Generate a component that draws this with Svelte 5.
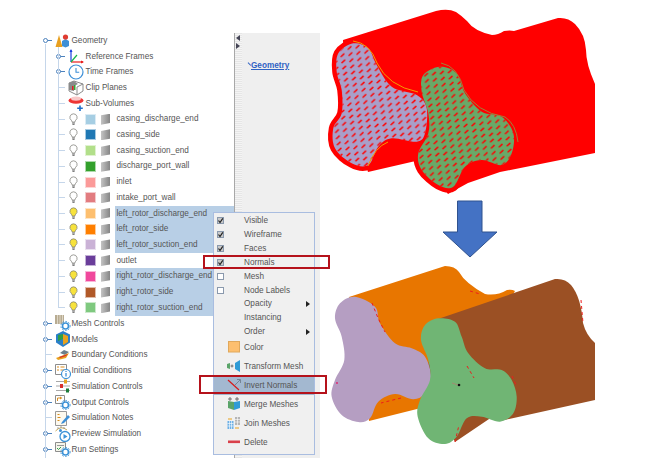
<script>
  // tree rows: kind top = root level, sub = under Geometry, mesh = surface with bulb and colour
  const geometryKids = [
    { label: 'Reference Frames', icon: 'axes', handle: true },
    { label: 'Time Frames', icon: 'clock', handle: true },
    { label: 'Clip Planes', icon: 'clip' },
    { label: 'Sub-Volumes', icon: 'subvol' }
  ];

  const meshes = [
    { label: 'casing_discharge_end', color: '#a6cee3' },
    { label: 'casing_side', color: '#1f78b4' },
    { label: 'casing_suction_end', color: '#b2df8a' },
    { label: 'discharge_port_wall', color: '#33a02c' },
    { label: 'inlet', color: '#fb9a99' },
    { label: 'intake_port_wall', color: '#e27c80' },
    { label: 'left_rotor_discharge_end', color: '#fdbf6f', on: true },
    { label: 'left_rotor_side', color: '#ff7f00', on: true },
    { label: 'left_rotor_suction_end', color: '#cab2d6', on: true },
    { label: 'outlet', color: '#6a3d9a' },
    { label: 'right_rotor_discharge_end', color: '#f0489c', on: true },
    { label: 'right_rotor_side', color: '#b15928', on: true },
    { label: 'right_rotor_suction_end', color: '#7fc97f', on: true }
  ];

  const sections = [
    { label: 'Mesh Controls', icon: 'meshctl', handle: true },
    { label: 'Models', icon: 'models', handle: true },
    { label: 'Boundary Conditions', icon: 'bc' },
    { label: 'Initial Conditions', icon: 'init', handle: true },
    { label: 'Simulation Controls', icon: 'sliders', handle: true },
    { label: 'Output Controls', icon: 'output', handle: true },
    { label: 'Simulation Notes', icon: 'notes' },
    { label: 'Preview Simulation', icon: 'preview', handle: true },
    { label: 'Run Settings', icon: 'run', handle: true }
  ];

  const toggles = [
    { label: 'Visible', box: 'on' },
    { label: 'Wireframe', box: 'on' },
    { label: 'Faces', box: 'on' },
    { label: 'Normals', box: 'on' },
    { label: 'Mesh', box: 'off' },
    { label: 'Node Labels', box: 'off' },
    { label: 'Opacity', more: true },
    { label: 'Instancing' },
    { label: 'Order', more: true }
  ];

  const actions = [
    { label: 'Color', icon: 'color' },
    { label: 'Transform Mesh', icon: 'transform' },
    { label: 'Invert Normals', icon: 'invert', active: true },
    { label: 'Merge Meshes', icon: 'merge' },
    { label: 'Join Meshes', icon: 'join' },
    { label: 'Delete', icon: 'delete' }
  ];

  // closed smooth curve through points (catmull-rom), points given in 3x coords
  function smooth(pts, ox = 0, oy = 0, s = 1 / 3) {
    const p = pts.map(([x, y]) => [ox + x * s, oy + y * s]);
    const n = p.length;
    let d = `M${p[0][0].toFixed(1)} ${p[0][1].toFixed(1)}`;
    for (let i = 0; i < n; i++) {
      const a = p[(i - 1 + n) % n], b = p[i], c = p[(i + 1) % n], e = p[(i + 2) % n];
      const c1 = [b[0] + (c[0] - a[0]) / 6, b[1] + (c[1] - a[1]) / 6];
      const c2 = [c[0] - (e[0] - b[0]) / 6, c[1] - (e[1] - b[1]) / 6];
      d += `C${c1[0].toFixed(1)} ${c1[1].toFixed(1)} ${c2[0].toFixed(1)} ${c2[1].toFixed(1)} ${c[0].toFixed(1)} ${c[1].toFixed(1)}`;
    }
    return d + 'Z';
  }

  const topLeft = smooth([[85,70],[130,85],[155,135],[200,200],[275,225],[305,265],[300,340],[275,365],[200,355],[160,380],[130,435],[80,430],[30,385],[25,325],[50,280],[50,210],[35,155],[40,100]], 325, 20);
  const topRight = smooth([[345,140],[395,160],[420,220],[470,275],[530,290],[565,340],[560,400],[530,435],[470,420],[420,440],[385,500],[340,495],[290,450],[280,400],[310,340],[310,280],[290,215],[295,165]], 325, 20);
  const lilac = smooth([[90,170],[150,200],[165,250],[210,310],[260,325],[300,350],[318,410],[300,460],[265,478],[210,462],[160,485],[135,535],[100,546],[50,525],[20,470],[30,420],[58,360],[50,290],[30,235],[45,190]], 325, 240);
  const green = smooth([[340,235],[390,245],[410,290],[430,340],[480,385],[530,390],[560,420],[575,470],[565,520],[525,545],[470,530],[425,535],[395,590],[360,612],[310,595],[278,530],[285,480],[315,420],[310,360],[288,300],[300,255]], 325, 240);
</script>

{#snippet gear()}
  <circle cx="10.5" cy="11" r="3" fill="#fff" stroke="#3c93d8" stroke-width="1.6" />
  <circle cx="10.5" cy="11" r="4.6" fill="none" stroke="#3c93d8" stroke-width="1" stroke-dasharray="1.5 1.5" />
{/snippet}

{#snippet treeIcon(name)}
  <svg class="ticon" viewBox="0 0 16 16" width="16" height="16">
    {#if name === 'geo'}
      <path d="M4 2 7.5 14H.5Z" fill="#e8a020" />
      <path d="M7 8l3.500-2 3.500 2v5l-3.500 1.500L7 13Z" fill="#3d8fd6" />
      <circle cx="10.5" cy="4" r="2.6" fill="#e03c31" />
    {:else if name === 'axes'}
      <path d="M3 14V2" stroke="#1a3fe0" stroke-width="1.2" fill="none" />
      <path d="M3 14h12" stroke="#e81c1c" stroke-width="1.2" fill="none" />
      <path d="M3 14l6-7" stroke="#19b54a" stroke-width="1.2" fill="none" />
      <path d="M1.5 4 3 1l1.5 3Z" fill="#1a3fe0" />
      <path d="M13 12.5l3 1.5-3 1.500Z" fill="#e81c1c" />
    {:else if name === 'clock'}
      <circle cx="8" cy="8" r="7" fill="#fff" stroke="#3d8fd6" stroke-width="1.2" />
      <path d="M8 4v4.300h3.200" stroke="#3d8fd6" stroke-width="1.1" fill="none" />
    {:else if name === 'clip'}
      <path d="M1 3l5-2 9 3v7l-6 4-8-4Z" fill="#fff" stroke="#8b8b8b" />
      <path d="M1 3l5-2 4 3-4 2v5l-5-1Z" fill="#8a8a8a" />
      <path d="M4 10V6h1.500v4Z" fill="#d22" />
      <path d="M6 10V5h1.500v5Z" fill="#3a3" />
      <path d="M9 15V7l6-3" stroke="#8b8b8b" fill="none" />
    {:else if name === 'subvol'}
      <ellipse cx="8" cy="5.5" rx="7.5" ry="3.2" fill="#ee3535" />
      <ellipse cx="8" cy="3.6" rx="5" ry="2.2" fill="#f8c8c8" />
      <path d="M12 10.500v5.500M9.200 13.200h5.600" stroke="#1d6fc8" stroke-width="1.600" />
    {:else if name === 'meshctl'}
      <path d="M0 0h9v9H0Z" fill="#b8ac92" />
      <path d="M2.500 0v9M5 0v9M7.500 0v9" stroke="#ece7db" stroke-width=".7" />
      {@render gear()}
    {:else if name === 'models'}
      <path d="M8 0l7 3.500v8L8 16 1 11.500v-8Z" fill="#2a7fc8" />
      <path d="M8 3l5 2v6l-5 3Z" fill="#e8a21e" />
      <path d="M3 4l5-1v5L3 10Z" fill="#2e9e45" />
    {:else if name === 'bc'}
      <path d="M5 6l4-3 5 2-4 3Z" fill="#6c7f8c" />
      <path d="M1 11l13-5-3 5-8 2Z" fill="#e8a21e" />
      <path d="M4 10l9-3-2 2-6 2Z" fill="#d9312b" />
    {:else if name === 'init'}
      <path d="M.5 1.500h11v10H.5Z" fill="#fff" stroke="#8d8d8d" />
      <path d="M2 4h2M2 7h2M5.500 4h4M5.500 7h4" stroke="#d98d1e" />
      <circle cx="11" cy="11" r="4.500" fill="#fff" stroke="#3c93d8" stroke-width="1.200" />
      <path d="M11 10v3.500M11 8v1" stroke="#3c93d8" stroke-width="1.300" />
    {:else if name === 'sliders'}
      <path d="M1 3.500h14M1 8h14M1 12.500h14" stroke="#a8a8a8" />
      <rect x="9" y="1.500" width="3" height="4" fill="#e8a21e" />
      <rect x="5" y="6" width="3" height="4" fill="#d9312b" />
      <rect x="11" y="10.500" width="3" height="4" fill="#1c7d3a" />
    {:else if name === 'output'}
      <path d="M.5 1.500h9v8h-9Z" fill="#fff" stroke="#8d8d8d" />
      <path d="M2.500 7V4h3" stroke="#d98d1e" fill="none" />
      <path d="M5 2.500 7.500 4 5 5.500Z" fill="#d98d1e" />
      {@render gear()}
    {:else if name === 'notes'}
      <path d="M.5 1.500h11v14H.5Z" fill="#fdf9ee" stroke="#999" />
      <path d="M2.500 4.500h2M2.500 7.500h3M2.500 10.500h2" stroke="#d98d1e" />
      <path d="M7 12l6-7 2 2-6 6-3 1Z" fill="#3d8fd6" />
    {:else if name === 'preview'}
      <path d="M.5 5Q6-1 12 4" stroke="#c9a850" fill="none" />
      <path d="M3 1v2M6 0v2M9 1v2" stroke="#8a8a8a" stroke-width=".8" />
      <circle cx="5.500" cy="4.500" r="1.500" fill="#3d8fd6" />
      <circle cx="10" cy="10.500" r="5" fill="#fff" stroke="#3c93d8" stroke-width="1.300" />
      <path d="M8.500 8l4 2.500-4 2.500Z" fill="#3c93d8" />
    {:else if name === 'run'}
      <path d="M.5 1.500h10v9H.5Z" fill="#f5f5ea" stroke="#8d8d8d" />
      <path d="M2 4.500h7" stroke="#999" />
      <path d="M2 7l1.500 1.500L6 6" stroke="#2ea04a" fill="none" />
      {@render gear()}
    {/if}
  </svg>
{/snippet}

{#snippet handle()}
  <svg class="handle" viewBox="0 0 9 7" width="9" height="7">
    <circle cx="2.5" cy="3.5" r="2" fill="#fff" stroke="#4d82bd" />
    <path d="M4.500 3.500H9" stroke="#4d82bd" />
  </svg>
{/snippet}

{#snippet menuIcon(name)}
  <svg viewBox="0 0 14 14" width="14" height="14">
    {#if name === 'color'}
      <rect x="1.500" y="1.500" width="11" height="10.500" fill="#fdbf6f" stroke="#e0a85c" />
    {:else if name === 'transform'}
      <path d="M0 5l3-1v6L0 9Z" fill="#5aa469" />
      <path d="M3.500 7h3M5 5.500v3" stroke="#555" stroke-width=".8" />
      <path d="M8 4l5-3v12L8 10Z" fill="#2f9bd6" />
    {:else if name === 'invert'}
      <path d="M1 2l11 10" stroke="#d61a1a" stroke-width="1.200" />
      <path d="M8 7l5-5" stroke="#6f7f8f" stroke-width=".9" />
      <path d="M10 1.500h3.500V5" stroke="#6f7f8f" stroke-width=".9" fill="none" />
    {:else if name === 'merge'}
      <path d="M1 4l6 1v8l-6-2Z" fill="#5aa469" />
      <path d="M7 5l6-1v7l-6 2Z" fill="#2f9bd6" />
      <path d="M3 0v4M10 0v4M1 2h4M8 2h4" stroke="#555" stroke-width=".8" />
    {:else if name === 'join'}
      <path d="M.5 5h6v8h-6Z" fill="#6eb1e6" />
      <path d="M.5 7.500h6M.5 10h6M2.500 5v8M4.500 5v8" stroke="#fff" stroke-width=".6" />
      <path d="M8 1h5v8H8Z" fill="#b5b5b5" />
      <path d="M8 3.500h5M8 6h5M10.500 1v8" stroke="#fff" stroke-width=".6" />
      <path d="M1 3h4M8 12h4" stroke="#e8a21e" />
    {:else if name === 'delete'}
      <rect x="1" y="5.500" width="12" height="2.600" fill="#d9404a" />
    {/if}
  </svg>
{/snippet}

<div class="page">
  <div class="tree-pane">
    <ul class="tree">
      <li class="row root">
        <span class="slot">{@render handle()}</span>
        {@render treeIcon('geo')}
        <span class="label">Geometry</span>
      </li>
      {#each geometryKids as kid}
        <li class="row sub">
          <span class="slot">
            {#if kid.handle}{@render handle()}{:else}<i class="dash"></i>{/if}
          </span>
          {@render treeIcon(kid.icon)}
          <span class="label">{kid.label}</span>
        </li>
      {/each}
      {#each meshes as m}
        <li class="row mesh">
          <span class="slot"><i class="dash"></i></span>
          <svg class="bulb" viewBox="0 0 10 14" width="9" height="13">
            <path d="M5 .7a4 4 0 0 0-2.400 7.200c.6.600.8 1.200.8 2h3.200c0-.8.200-1.400.8-2A4 4 0 0 0 5 .7Z" fill={m.on ? '#f7e23c' : '#fff'} stroke="#77766f" stroke-width=".8" />
            <path d="M3.500 11h3M3.800 12.500h2.400" stroke="#666" />
          </svg>
          <span class="swatch" style="background:{m.color}"></span>
          <span class="cube"></span>
          <span class="label" class:picked={m.on}>{m.label}</span>
        </li>
      {/each}
      {#each sections as s}
        <li class="row root">
          <span class="slot">
            {#if s.handle}{@render handle()}{:else}<i class="dash"></i>{/if}
          </span>
          {@render treeIcon(s.icon)}
          <span class="label">{s.label}</span>
        </li>
      {/each}
    </ul>
    <span class="spine"></span>
    <span class="spine kids"></span>

    <div class="menu">
      <ul class="toggles">
        {#each toggles as t}
          <li>
            <span class="box">
              {#if t.box}
                <svg viewBox="0 0 7 7" width="7" height="7">
                  <rect x=".5" y=".5" width="6" height="6" fill={t.box === 'on' ? '#c9c9c9' : '#fff'} stroke="#8a99ad" />
                  {#if t.box === 'on'}<path d="M1.500 3.500 3 5.500 5.800 1.300" stroke="#222" stroke-width="1.200" fill="none" />{/if}
                </svg>
              {/if}
            </span>
            <span>{t.label}</span>
            {#if t.more}<i class="more"></i>{/if}
          </li>
        {/each}
      </ul>
      <ul class="actions">
        {#each actions as a}
          <li class:active={a.active}>
            <span class="aicon">{@render menuIcon(a.icon)}</span>
            <span>{a.label}</span>
          </li>
        {/each}
      </ul>
    </div>

    <span class="callout normals"></span>
    <span class="callout invert"></span>
  </div>

  <div class="splitter">
    <i class="nub left"></i>
    <i class="nub right"></i>
  </div>

  <div class="crumb-pane">
    <a class="crumb" href="#geometry"><i class="crumb-arrow"></i>Geometry</a>
  </div>

  <svg class="figure" viewBox="320 0 331 458" width="331" height="458">
    <defs>
      <pattern id="hatch" width="8" height="6.2" patternUnits="userSpaceOnUse" patternTransform="rotate(-8)">
        <path d="M1.500 4.500 5.500 1.800" stroke="#ff0000" stroke-width="1.500" />
      </pattern>
    </defs>

    <!-- before: red, normals showing -->
    <path d="M343 40 436 11Q448 8 456 12 462 16 467 21 474 31 492 35 498 35 504 31 510 30 514 31L558 18Q568 17 575 24 585 34 586 50 586 64 595 84V153L500 172 468 183 448 194 420 160 368 172 345 100Z" fill="#ff0000" />
    <path d={topLeft} fill="#ff0000" stroke="#ff0000" stroke-width="9" />
    <path d={topRight} fill="#ff0000" stroke="#ff0000" stroke-width="9" />
    <path d={topLeft} fill="#a99fc9" />
    <path d={topLeft} fill="url(#hatch)" />
    <path d={topRight} fill="#69a968" />
    <path d={topRight} fill="url(#hatch)" />
    <path d="M353 41Q370 43 377 63 388 86 418 92" fill="none" stroke="#f59a00" stroke-width="1" />
    <path d="M368 166Q375 147 388 142" fill="none" stroke="#f59a00" stroke-width="1" />
    <path d="M441 63Q458 66 464 90 476 112 505 117 516 124 518 142" fill="none" stroke="#a0803a" stroke-width="1" />

    <!-- arrow between the two states -->
    <path d="M457.500 201H482V232H497L470 257 443 232H457.500Z" fill="#4472c4" stroke="#2f528f" />

    <!-- after: inverted normals -->
    <path d="M349 297 445 266Q455 266 459 272 465 283 485 294 497 296 507 290 512 289 515 291L470 370 425 407 369 421 362 350Z" fill="#e87600" />
    <path d="M438 319 555 279Q565 278 571 285 581 297 583 323 586 335 595 343V400L500 421 492 417 455 442 425 380Z" fill="#9b5024" />
    <path d={lilac} fill="#b59ec2" />
    <path d={green} fill="#70b574" />
    <path d="M372 303 378 318 385 332M470 291 480 294M581 300 583 323M401 398 381 403M455 442 459 425M512 376 516 385M467 366 474 378" fill="none" stroke="#ee1c1c" stroke-width="1" stroke-dasharray="3 3" />
    <circle cx="459" cy="385" r="1.300" fill="#111" />
    <path d="M452 383 458 385" stroke="#b57a70" stroke-width=".7" />
    <circle cx="337" cy="383" r=".9" fill="#e0206a" />
  </svg>
</div>

<style>
  :global(body) {
    margin: 0;
    background: #fff;
  }

  .page {
    display: flex;
    width: 651px;
    height: 458px;
    overflow: hidden;
    font-family: "Liberation Sans", Arial, sans-serif;
    font-size: 8.2px;
    color: #555;
  }

  ul {
    list-style: none;
    margin: 0;
    padding: 0;
  }

  .tree-pane {
    position: relative;
    flex: 0 0 234px;
    padding-top: 32.7px;
    box-sizing: border-box;
  }

  .row {
    display: flex;
    align-items: center;
    height: 15.72px;
    white-space: nowrap;
  }

  .slot {
    display: flex;
    align-items: center;
    flex: none;
    width: 12px;
  }

  .root {
    padding-left: 42.5px;
  }

  .root .ticon {
    margin-right: 1px;
  }

  .sub {
    padding-left: 56px;
  }

  .sub .ticon {
    margin-right: 1.500px;
  }

  .mesh {
    padding-left: 56px;
    margin-right: -1px;
  }

  .handle {
    flex: none;
  }

  .dash {
    display: block;
    width: 6px;
    height: 1px;
    margin-left: 3px;
    background: #c5d6ea;
  }

  .bulb {
    flex: none;
    margin-left: 1px;
  }

  .swatch {
    flex: none;
    box-sizing: border-box;
    width: 11px;
    height: 11px;
    margin-left: 7px;
    border: .5px solid rgba(255, 255, 255, .6);
  }

  .cube {
    flex: none;
    width: 9px;
    height: 11px;
    margin-left: 5px;
    background: linear-gradient(90deg, #c4c4c4, #858585);
    clip-path: polygon(0 15%, 100% 0, 100% 85%, 0 100%);
  }

  .mesh .label {
    flex: 1;
    margin-left: 4.5px;
    padding-left: 2px;
    line-height: 15.72px;
  }

  .label.picked {
    background: #b8cfe6;
  }

  .spine {
    position: absolute;
    top: 44px;
    left: 45px;
    bottom: 0;
    width: 1px;
    background: #c5d6ea;
  }

  .spine.kids {
    top: 47px;
    left: 58px;
    bottom: auto;
    height: 261px;
  }

  .menu {
    position: absolute;
    z-index: 2;
    top: 212px;
    left: 213px;
    width: 100px;
    height: 240px;
    background: #f0f0f0;
    border: 1px solid #a9bde0;
    padding-top: 1px;
    box-sizing: content-box;
  }

  .toggles li {
    position: relative;
    display: flex;
    align-items: center;
    height: 13.85px;
    padding-left: 3px;
  }

  .box {
    display: flex;
    flex: none;
    width: 27px;
  }

  .more {
    position: absolute;
    right: 4px;
    top: 4px;
    border-left: 4px solid #222;
    border-top: 3px solid transparent;
    border-bottom: 3px solid transparent;
  }

  .actions {
    margin-top: -1px;
  }

  .actions li {
    display: flex;
    align-items: center;
    height: 19px;
  }

  .aicon {
    display: flex;
    flex: none;
    box-sizing: border-box;
    width: 30px;
    padding-left: 13px;
  }

  .actions .active {
    background: #a3b8d0;
  }

  .callout {
    position: absolute;
    z-index: 3;
    box-sizing: border-box;
    border: 2px solid #b5121b;
  }

  .callout.normals {
    top: 255px;
    left: 203px;
    width: 127px;
    height: 14px;
  }

  .callout.invert {
    top: 375px;
    left: 199px;
    width: 128px;
    height: 19px;
  }

  .splitter {
    position: relative;
    flex: 0 0 8px;
    margin-top: 33px;
    border-left: 1px solid #a8a8a8;
    box-sizing: border-box;
    background: repeating-linear-gradient(0deg, #e6e6e6 0 1px, #f4f4f4 1px 2px);
  }

  .nub {
    position: absolute;
    left: 1px;
    border-top: 3px solid transparent;
    border-bottom: 3px solid transparent;
  }

  .nub.left {
    top: 2px;
    border-right: 4px solid #445;
  }

  .nub.right {
    top: 10px;
    border-left: 4px solid #445;
  }

  .crumb-pane {
    flex: 0 0 78px;
    margin-top: 33px;
    background: #efefef;
    padding: 28px 0 0 4px;
    box-sizing: border-box;
  }

  .crumb {
    display: inline-flex;
    align-items: center;
    color: #2f63c4;
    font-size: 8.2px;
    font-weight: bold;
    text-decoration: underline;
  }

  .crumb-arrow {
    width: 4px;
    height: 4px;
    margin-right: 1px;
    border-top: 1px solid #2f63c4;
    transform: rotate(45deg);
  }

  .figure {
    display: block;
    flex: none;
  }
</style>
